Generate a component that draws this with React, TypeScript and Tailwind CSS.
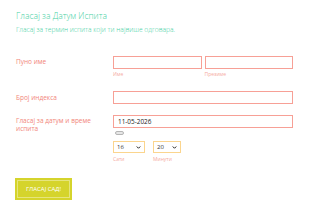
import React from 'react';

function Select({ value, width }: { value: string; width: string }) {
  return (
    <div className={`${width} h-[12px] border border-[#fbd58e] flex items-center justify-between pl-[3px] pr-[3px]`}>
      <span className="text-[6px] text-[#333] leading-none">{value}</span>
      <svg viewBox="0 0 10 10" className="w-[5px] h-[5px]">
        <path d="M1.5 3 L5 6.5 L8.5 3" fill="none" stroke="#222" strokeWidth="2" />
      </svg>
    </div>
  );
}

export default function App() {
  return (
    <div
      className="w-[310px] h-[212px] bg-white overflow-hidden pl-[16px] pr-[17px] pt-[10px]"
      style={{ fontFamily: '"Open Sans", "Noto Sans", sans-serif' }}
    >
      <div className="text-[8.5px] leading-[12px] text-[#45d0a3] font-light">Гласај за Датум Испита</div>
      <div className="mt-[3px] text-[6.7px] leading-[9px] text-[#45d0a3] font-light">Гласај за термин испита који ти највише одговара.</div>

      {/* Пуно име */}
      <div className="flex mt-[22px]">
        <div className="w-[97px] pt-[2px] text-[6.5px] leading-[8px] text-[#f2867b]">Пуно име</div>
        <div className="flex-1 flex gap-[3px]">
          <div className="flex-1">
            <div className="h-[13px] border border-[#f7a096]" />
            <div className="mt-[2px] text-[5px] leading-[6px] text-[#f5aaa1]">Име</div>
          </div>
          <div className="flex-1">
            <div className="h-[13px] border border-[#f7a096]" />
            <div className="mt-[2px] text-[5px] leading-[6px] text-[#f5aaa1]">Презиме</div>
          </div>
        </div>
      </div>

      {/* Број индекса */}
      <div className="flex mt-[14px]">
        <div className="w-[97px] pt-[3px] text-[6.5px] leading-[8px] text-[#f2867b]">Број индекса</div>
        <div className="flex-1 h-[13px] border border-[#f7a096]" />
      </div>

      {/* Датум и време */}
      <div className="flex mt-[11px]">
        <div className="w-[97px] pt-[2px] pr-[10px] text-[6.5px] leading-[8px] text-[#f2867b]">Гласај за датум и време испита</div>
        <div className="flex-1">
          <div className="h-[13px] border border-[#f7a096] flex items-center pl-[4px] text-[6.4px] text-[#222]">11-05-2026</div>
          <div className="mt-[3px] ml-[2px] w-[9px] h-[4px] rounded-full border border-[#b5b5b5] bg-[#e6e6e6]" />
          <div className="mt-[6px] flex gap-[8px]">
            <div>
              <Select value="16" width="w-[32px]" />
              <div className="mt-[3px] text-[5px] leading-[6px] text-[#f5aaa1]">Сати</div>
            </div>
            <div>
              <Select value="20" width="w-[28px]" />
              <div className="mt-[3px] text-[5px] leading-[6px] text-[#f5aaa1]">Минути</div>
            </div>
          </div>
        </div>
      </div>

      <div className="mt-[16px] -ml-[1px] w-[57px] h-[22px] bg-[#d5d42c] p-[2px]">
        <div className="w-full h-full border border-[#e6e57c] flex items-center justify-center text-[6px] text-white">
          ГЛАСАЈ САД!
        </div>
      </div>
    </div>
  );
}
